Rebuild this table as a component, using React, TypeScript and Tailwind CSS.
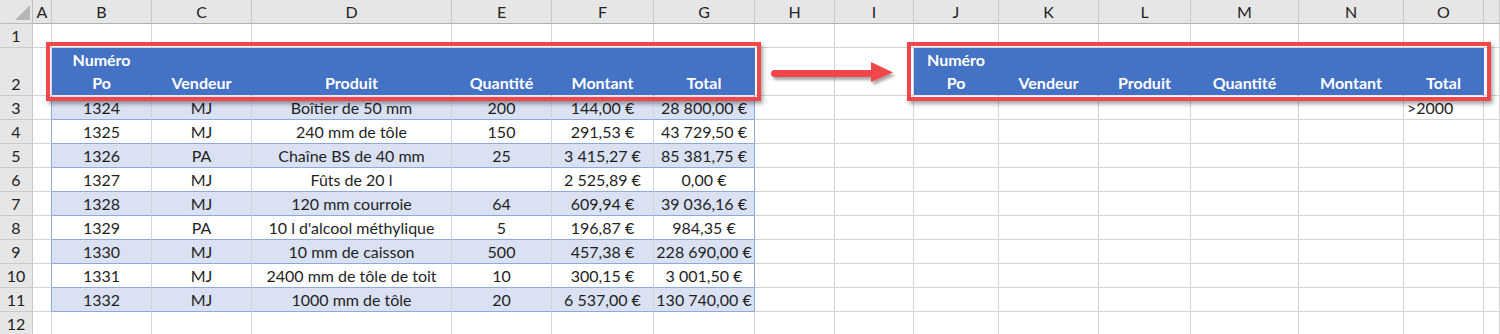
const COLS = ["A", "B", "C", "D", "E", "F", "G", "H", "I", "J", "K", "L", "M", "N", "O", ""];

const HEAD = [
  ["Numéro", "Po"],
  ["", "Vendeur"],
  ["", "Produit"],
  ["", "Quantité"],
  ["", "Montant"],
  ["", "Total"],
];

const DATA = [
  ["1324", "MJ", "Boîtier de 50 mm", "200", "144,00 €", "28 800,00 €"],
  ["1325", "MJ", "240 mm de tôle", "150", "291,53 €", "43 729,50 €"],
  ["1326", "PA", "Chaîne BS de 40 mm", "25", "3 415,27 €", "85 381,75 €"],
  ["1327", "MJ", "Fûts de 20 l", "", "2 525,89 €", "0,00 €"],
  ["1328", "MJ", "120 mm courroie", "64", "609,94 €", "39 036,16 €"],
  ["1329", "PA", "10 l d'alcool méthylique", "5", "196,87 €", "984,35 €"],
  ["1330", "MJ", "10 mm de caisson", "500", "457,38 €", "228 690,00 €"],
  ["1331", "MJ", "2400 mm de tôle de toit", "10", "300,15 €", "3 001,50 €"],
  ["1332", "MJ", "1000 mm de tôle", "20", "6 537,00 €", "130 740,00 €"],
];

function RowNum({ n }: { n: number }) {
  return (
    <div className="flex items-end justify-center border-r border-b border-[#c9c9c9] bg-[#e6e6e6] text-[#222]">
      <span className="leading-[23px]">{n}</span>
    </div>
  );
}

function Blank() {
  return <div className="border-r border-b border-[#d4d4d4]" />;
}

function HeadCell({ lines }: { lines: string[] }) {
  return (
    <div className="flex flex-col items-center justify-end border-r border-b border-r-[#4472c4] border-b-[#e4eaf6] bg-[#4472c4] font-bold text-white">
      <span className="leading-[23px]">{lines[0]}</span>
      <span className="leading-[24px]">{lines[1]}</span>
    </div>
  );
}

export default function App() {
  return (
    <div className="relative h-[334px] w-[1500px] overflow-hidden bg-white font-['Lato',sans-serif] text-[16px] text-[#1f1f1f]">
      <div className="grid grid-cols-[33px_19px_100px_100px_200px_100px_102px_101px_80px_79px_85px_100px_92px_108px_105px_80px_1fr] grid-rows-[24px_24px_48px_repeat(10,24px)]">
        {/* column letters */}
        <div className="relative border-r border-b border-[#bdbdbd] bg-[#e6e6e6]">
          <svg className="absolute left-[14px] top-[5px]" width="17" height="16" viewBox="0 0 17 16">
            <polygon points="16,0 16,15 1,15" fill="#b7b7b7" />
          </svg>
        </div>
        {COLS.map((c, i) => (
          <div
            key={i}
            className="flex items-center justify-center border-r border-b border-r-[#c9c9c9] border-b-[#b0b0b0] bg-[#e6e6e6] text-[#222]"
          >
            {c}
          </div>
        ))}

        {/* row 1 */}
        <RowNum n={1} />
        {COLS.map((_, i) => (
          <Blank key={i} />
        ))}

        {/* row 2: headers */}
        <RowNum n={2} />
        <Blank />
        {HEAD.map((h, i) => (
          <HeadCell key={i} lines={h} />
        ))}
        <Blank />
        <Blank />
        {HEAD.map((h, i) => (
          <HeadCell key={"r" + i} lines={h} />
        ))}
        <Blank />

        {/* rows 3-11: data */}
        {DATA.map((row, r) => (
          <div key={r} className="contents">
            <RowNum n={r + 3} />
            <div className="border-r border-b border-r-[#8ea9db] border-b-[#d4d4d4]" />
            {row.map((v, c) => (
              <div
                key={c}
                className={`flex items-center justify-center border-r border-b border-b-[#8ea9db] ${
                  c === 5 ? "border-r-[#8ea9db]" : "border-r-[#d4d4d4]"
                } ${r % 2 === 0 ? "bg-[#d9e1f2]" : "bg-white"}`}
              >
                <span className="leading-[23px]">{v}</span>
              </div>
            ))}
            <Blank />
            <Blank />
            <Blank />
            <Blank />
            <Blank />
            <Blank />
            <Blank />
            <div className="flex items-center border-r border-b border-[#d4d4d4] pl-[3px]">
              <span className="leading-[23px]">{r === 0 ? ">2000" : ""}</span>
            </div>
            <Blank />
          </div>
        ))}

        {/* row 12 */}
        <RowNum n={12} />
        {COLS.map((_, i) => (
          <Blank key={i} />
        ))}
      </div>

      {/* highlight frames */}
      <div className="absolute left-[46px] top-[42px] h-[59px] w-[715px] border-[4px] border-[#f0474b] shadow-[2px_3px_4px_rgba(0,0,0,0.35)]" />
      <div className="absolute left-[907px] top-[42px] h-[59px] w-[584px] border-[4px] border-[#f0474b] shadow-[2px_3px_4px_rgba(0,0,0,0.35)]" />

      {/* arrow */}
      <svg className="absolute left-[766px] top-[56px]" width="136" height="34" viewBox="0 0 136 34">
        <defs>
          <filter id="sh" x="-10%" y="-30%" width="130%" height="180%">
            <feDropShadow dx="2" dy="3" stdDeviation="1.6" floodColor="#000" floodOpacity="0.35" />
          </filter>
        </defs>
        <g filter="url(#sh)" fill="#f0474b">
          <rect x="5" y="14" width="102" height="7" rx="3.5" />
          <polygon points="105,6 127,16.5 105,26" />
        </g>
      </svg>
    </div>
  );
}
